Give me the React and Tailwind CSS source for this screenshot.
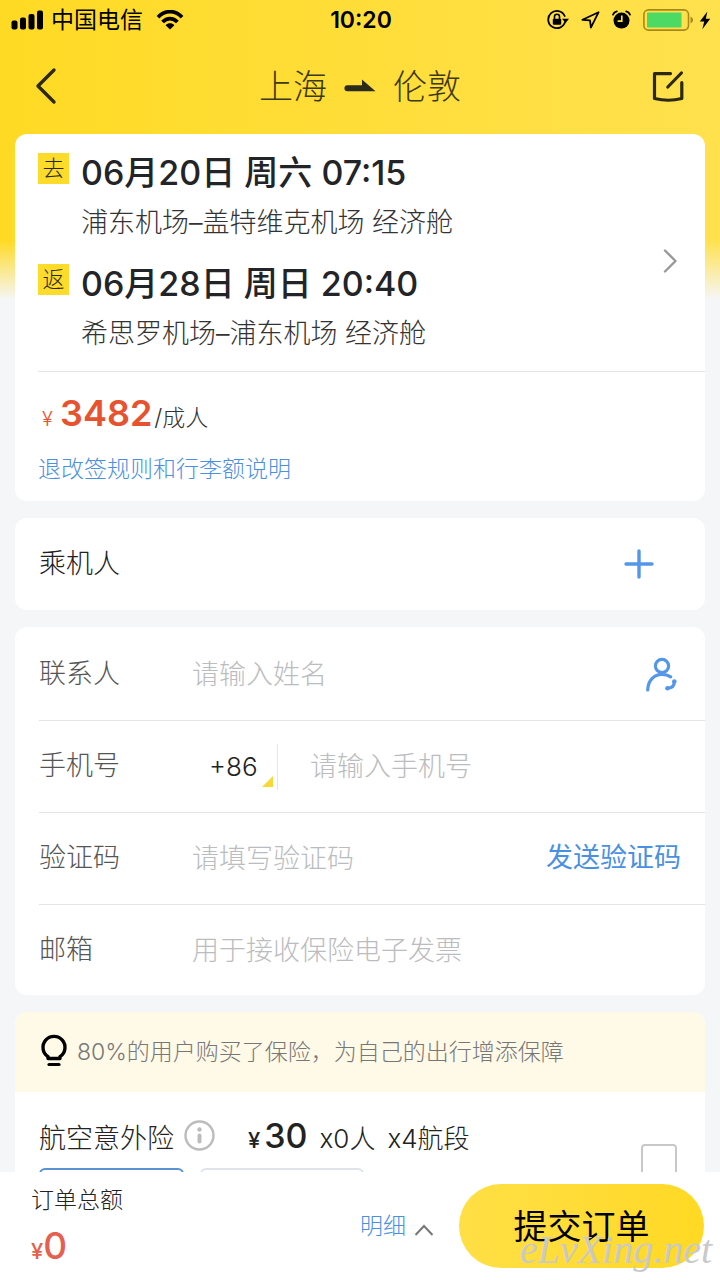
import React from "react";

const stroke = {
  fill: "none",
  stroke: "currentColor",
  strokeLinecap: "round",
  strokeLinejoin: "round",
};

function StatusBar() {
  return (
    <div className="grid h-10 shrink-0 grid-cols-[1fr_auto_1fr] items-center pl-[11px] pr-[9px] text-black">
      <div className="flex items-center">
        <svg width="33" height="20" viewBox="0 0 33 20" fill="currentColor" aria-hidden="true">
          <rect x="0.5" y="10.5" width="6" height="9" rx="2" />
          <rect x="9" y="7.5" width="6" height="12" rx="2" />
          <rect x="17.5" y="4" width="6" height="15.5" rx="2" />
          <rect x="26" y="0.5" width="6" height="19" rx="2" />
        </svg>
        <span className="ml-[7px] text-[23px] leading-8">中国电信</span>
        <svg className="ml-[13px]" width="28" height="20" viewBox="0 0 28 20" aria-hidden="true">
          <g fill="none" stroke="currentColor" strokeWidth="3.8">
            <path d="M2 7.2C8.8 -0.2 19.2 -0.2 26 7.2" />
            <path d="M6.6 12C11 7.4 17 7.4 21.4 12" />
          </g>
          <path d="M9.6 15.2c2.6-2.6 6.2-2.6 8.8 0L14 19.6z" fill="currentColor" />
        </svg>
      </div>
      <span className="text-[23px] font-semibold leading-8">10:20</span>
      <div className="flex items-center justify-end">
        <svg width="22" height="20" viewBox="0 0 22 20" aria-hidden="true">
          <path d="M18.3 11.2A8.6 8.6 0 1 1 17.7 6" {...stroke} strokeWidth="1.8" />
          <path d="M15 8.8h7l-3.4 4.2z" fill="currentColor" />
          <rect x="5.8" y="8.8" width="8.4" height="6" rx="1" fill="currentColor" />
          <path d="M7.5 9V6.8a2.5 2.5 0 0 1 5 0V9" {...stroke} strokeWidth="1.6" />
        </svg>
        <svg className="ml-3" width="19" height="18" viewBox="0 0 19 18" aria-hidden="true">
          <path d="M17.6 1.2 1.4 8.8l7.6.6.9 7.3z" {...stroke} strokeWidth="1.8" />
        </svg>
        <svg className="ml-3" width="19" height="20" viewBox="0 0 19 20" aria-hidden="true">
          <circle cx="9.5" cy="10.6" r="8" fill="currentColor" />
          <path d="M1 4.6Q2 2 4.8 1.4M18 4.6Q17 2 14.2 1.4" {...stroke} strokeWidth="1.8" />
          <path d="M9.8 5.6v5.6H5.6" fill="none" stroke="#ffdf45" strokeWidth="1.7" />
        </svg>
        <svg className="ml-3" width="52" height="22" viewBox="0 0 52 22" aria-hidden="true">
          <rect x="0.9" y="0.9" width="44.6" height="20.2" rx="4.5" fill="none" stroke="#a8891a" strokeWidth="1.6" />
          <rect x="4" y="3.6" width="34.5" height="14.8" rx="1" fill="#4cd964" />
          <path d="M47.5 7.4q2.6 1.2 2.6 3.6t-2.6 3.6z" fill="#a8891a" />
        </svg>
        <svg className="ml-1" width="12" height="19" viewBox="0 0 12 19" fill="currentColor" aria-hidden="true">
          <path d="M8.4 0.6 0.8 10.6h4.4L3.4 18.2l7.8-10.4H6.8z" />
        </svg>
      </div>
    </div>
  );
}

function NavBar() {
  return (
    <header className="flex h-[94px] shrink-0 items-center justify-between px-[34px] text-[#2b2913]">
      <button type="button" aria-label="返回" className="flex w-9 items-center">
        <svg width="26" height="40" viewBox="0 0 26 40" aria-hidden="true">
          <path d="M20 3 4 19l16 16" {...stroke} strokeWidth="3.4" />
        </svg>
      </button>
      <h1 className="flex items-center text-[34px] font-light leading-[44px] text-[#3d390f]">
        <span>上海</span>
        <svg className="mx-4" width="34" height="16" viewBox="0 0 34 16" aria-hidden="true">
          <path d="M4.4 6.2H19V0.6L32.5 12.2H4.4a3 3 0 0 1 0-6z" fill="#2b2b1c" />
        </svg>
        <span>伦敦</span>
      </h1>
      <button type="button" aria-label="编辑" className="flex w-9 items-center justify-end">
        <svg width="36" height="36" viewBox="0 0 36 36" aria-hidden="true">
          <path d="M20.5 4.6H4.5V29.5Q18.500 33 31.8 29.5V13.500" {...stroke} strokeWidth="3.2" />
          <path d="M17.8 18 31.4 4" {...stroke} strokeWidth="3.2" />
        </svg>
      </button>
    </header>
  );
}

function Flight({ tag, time, route }) {
  return (
    <div className="grid grid-cols-[31px_1fr] gap-x-3">
      <span className="flex h-[31px] items-center justify-center bg-[#fddb2b] text-[22px] font-light leading-[31px] text-[#2b2913]">
        {tag}
      </span>
      <div>
        <p className="whitespace-nowrap text-[34px] font-medium leading-10 text-[#222427]">{time}</p>
        <p className="mt-3 whitespace-nowrap text-[27px] font-light leading-9 text-[#333]">{route}</p>
      </div>
    </div>
  );
}

function Field({ label, id, placeholder, type = "text", children, prefix, last }) {
  return (
    <div className={last ? "flex h-[90px] items-center pr-6" : "flex h-[92px] items-center border-b border-[#e4e5e7] pr-6"}>
      <label htmlFor={id} className="w-[153px] shrink-0 text-[27px] font-light text-[#555]">
        {label}
      </label>
      {prefix}
      <input
        id={id}
        type={type}
        placeholder={placeholder}
        className="h-16 min-w-0 flex-1 bg-transparent text-[27px] font-light text-[#333] outline-none placeholder:text-[#bbbcc0]"
      />
      {children}
    </div>
  );
}

export default function App() {
  return (
    <div className="relative flex h-screen flex-col overflow-hidden bg-[linear-gradient(to_bottom,#f5f6f800_240px,#f5f6f8_300px),linear-gradient(to_right,#ffda24,#ffe14e)] font-['Inter','Noto_Sans_CJK_SC',sans-serif]">
      <StatusBar />
      <NavBar />

      <main className="flex min-h-0 flex-1 flex-col gap-[17px] overflow-y-auto px-[15px] [scrollbar-width:none]">
        <section className="shrink-0 rounded-xl bg-white pl-[23px]">
          <div className="flex items-center justify-between border-b border-[#e4e5e7] pb-[19px] pr-[26px] pt-[19px]">
            <div className="flex flex-col gap-[23px]">
              <Flight tag="去" time="06月20日 周六 07:15" route="浦东机场–盖特维克机场 经济舱" />
              <Flight tag="返" time="06月28日 周日 20:40" route="希思罗机场–浦东机场 经济舱" />
            </div>
            <button type="button" aria-label="航班详情" className="mt-4 text-[#999]">
              <svg width="20" height="30" viewBox="0 0 20 30" aria-hidden="true">
                <path d="M6 4.500 16.500 15 6 25.500" {...stroke} strokeWidth="2.400" />
              </svg>
            </button>
          </div>
          <div className="flex flex-col items-start gap-4 pb-4 pt-[17px]">
            <p className="flex h-12 items-baseline leading-[48px]">
              <span className="w-[22px] pl-1 text-[20px] font-light text-[#e8532f]">¥</span>
              <span className="text-[36px] font-semibold text-[#e8532f]">3482</span>
              <span className="ml-0.5 text-[23px] font-light text-[#333]">/成人</span>
            </p>
            <a href="#rules" className="text-[23px] font-light leading-8 text-[#4a90e2]">
              退改签规则和行李额说明
            </a>
          </div>
        </section>

        <section className="flex h-[92px] shrink-0 items-center justify-between rounded-xl bg-white pl-6 pr-[51px]">
          <h2 className="text-[27px] font-light text-[#222]">乘机人</h2>
          <button type="button" aria-label="添加乘机人" className="text-[#5496e8]">
            <svg width="30" height="30" viewBox="0 0 30 30" aria-hidden="true">
              <path d="M15 2v26M2 15h26" {...stroke} strokeWidth="3.4" />
            </svg>
          </button>
        </section>

        <form className="shrink-0 rounded-xl bg-white pl-6 pt-0.5">
          <Field label="联系人" id="contact" placeholder="请输入姓名">
            <button type="button" aria-label="选择联系人" className="text-[#5496e8]">
              <svg width="38" height="38" viewBox="0 0 38 38" aria-hidden="true">
                <g {...stroke} strokeWidth="3.2">
                  <circle cx="19" cy="10" r="6.600" />
                  <path d="M4.700 34C5 24.500 11 18.300 19 18.300q4.800 0 8.700 2.600" />
                  <path d="M31.300 25.800q0 6-6.500 6.500" />
                </g>
                <circle cx="31.300" cy="25.500" r="2.300" fill="currentColor" />
                <circle cx="24.500" cy="32.300" r="2.300" fill="currentColor" />
              </svg>
            </button>
          </Field>
          <Field
            label="手机号"
            id="phone"
            type="tel"
            placeholder="请输入手机号"
            prefix={
              <div className="relative mr-8 h-[46px] w-[86px] shrink-0 border-r border-[#e4e5e7]">
                <select
                  aria-label="国家代码"
                  className="h-full w-full appearance-none bg-transparent pl-[17px] text-[26px] font-light text-[#222] outline-none"
                >
                  <option>+86</option>
                </select>
                <svg
                  className="pointer-events-none absolute bottom-[3px] right-1"
                  width="11"
                  height="11"
                  viewBox="0 0 11 11"
                  aria-hidden="true"
                >
                  <path d="M11 0v11H0z" fill="#f6d936" />
                </svg>
              </div>
            }
          />
          <Field label="验证码" id="code" placeholder="请填写验证码">
            <button type="button" className="shrink-0 text-[27px] text-[#4a90e2]">
              发送验证码
            </button>
          </Field>
          <Field label="邮箱" id="email" type="email" placeholder="用于接收保险电子发票" last />
        </form>

        <section className="shrink-0 overflow-hidden rounded-xl bg-white">
          <div className="flex h-20 items-center bg-[#fffae8] pl-[25px]">
            <svg width="28" height="36" viewBox="0 0 28 36" aria-hidden="true">
              <path
                d="M8 24.500V22.600a11 11 0 1 1 12 0V24.500z"
                fill="none"
                stroke="#000"
                strokeWidth="3.400"
                strokeLinejoin="round"
              />
              <path d="M9 30.500h10" stroke="#000" strokeWidth="3.200" strokeLinecap="round" />
            </svg>
            <p className="ml-[9px] whitespace-nowrap text-[23px] font-light text-[#777]">
              80%的用户购买了保险，为自己的出行增添保障
            </p>
          </div>
          <div className="flex items-center justify-between pb-6 pl-6 pr-7 pt-4">
            <div>
              <div className="flex h-[60px] items-baseline whitespace-nowrap text-[27px] font-light leading-[56px] text-[#222]">
                <h2>航空意外险</h2>
                <button type="button" aria-label="保险说明" className="ml-[10px] mb-1.5 self-center">
                  <svg width="31" height="31" viewBox="0 0 31 31" aria-hidden="true">
                    <circle cx="15.500" cy="15.500" r="14" fill="none" stroke="#bcbcbc" strokeWidth="2.400" />
                    <circle cx="15.500" cy="9.500" r="2.200" fill="#bcbcbc" />
                    <path d="M15.500 15.500v6" stroke="#bcbcbc" strokeWidth="4" strokeLinecap="round" />
                  </svg>
                </button>
                <p className="ml-[33px] flex items-baseline">
                  <span className="mr-1 text-[22px] font-medium">¥</span>
                  <span className="text-[34px] font-medium">30</span>
                  <span className="ml-3 text-[26px]">x0人</span>
                  <span className="ml-3 text-[26px]">x4航段</span>
                </p>
              </div>
              <div className="flex h-12 gap-4">
                <button type="button" aria-label="方案一" className="w-[145px] rounded-md border-2 border-[#5a93cf]" />
                <button type="button" aria-label="方案二" className="w-[164px] rounded-md border-2 border-[#dfe3ea]" />
              </div>
            </div>
            <input
              type="checkbox"
              aria-label="购买航空意外险"
              className="h-9 w-9 shrink-0 appearance-none rounded-sm border-2 border-[#c8c8c8] bg-white"
            />
          </div>
        </section>
      </main>

      <footer className="flex h-[108px] shrink-0 items-center justify-between bg-white pl-[31px] pr-4">
        <div className="whitespace-nowrap">
          <p className="text-[23px] font-light leading-8 text-[#222]">订单总额</p>
          <p className="mt-2 flex h-11 items-baseline leading-[44px] text-[#e5604f]">
            <span className="text-[22px] font-medium">¥</span>
            <span className="text-[37px] font-medium">0</span>
          </p>
        </div>
        <div className="flex items-center">
          <button type="button" className="mr-[25px] flex items-center whitespace-nowrap text-[23px] font-light text-[#4a90e2]">
            明细
            <svg className="ml-2 mt-2" width="20" height="14" viewBox="0 0 20 14" aria-hidden="true">
              <path d="M1.500 12 10 3l8.500 9" fill="none" stroke="#777" strokeWidth="2" />
            </svg>
          </button>
          <button
            type="button"
            className="h-[84px] w-[245px] rounded-full bg-linear-to-r from-[#ffdf45] to-[#ffd922] text-[34px] text-black"
          >
            提交订单
          </button>
        </div>
      </footer>

      <span className="pointer-events-none absolute bottom-2 right-2 font-['Liberation_Serif',serif] text-[40px] italic leading-[44px] text-[#c9c9c9]">
        eLvXing.net
      </span>
    </div>
  );
}
